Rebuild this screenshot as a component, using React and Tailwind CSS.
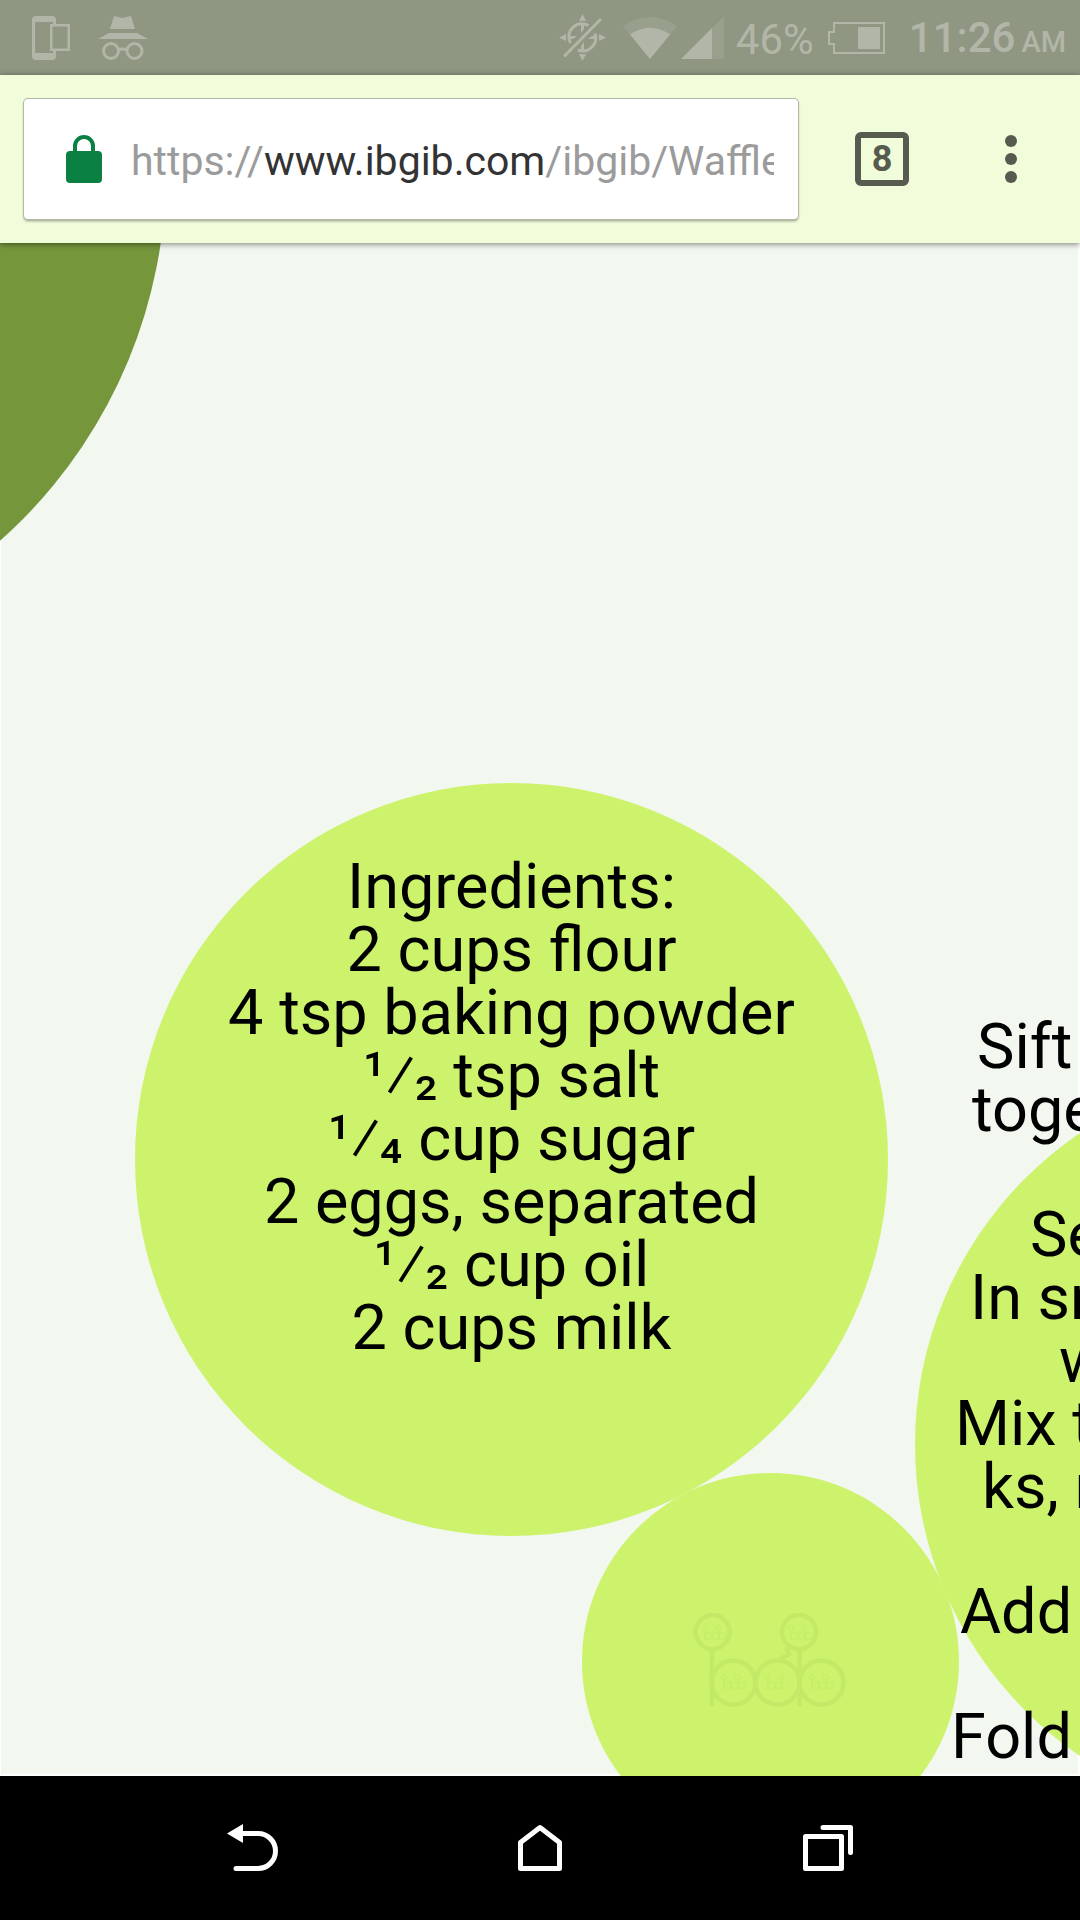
const ingredients = [
  { text: "Ingredients:" },
  { text: "2 cups flour" },
  { text: "4 tsp baking powder" },
  { over: "¹", under: "₂", text: " tsp salt" },
  { over: "¹", under: "₄", text: " cup sugar" },
  { text: "2 eggs, separated" },
  { over: "¹", under: "₂", text: " cup oil" },
  { text: "2 cups milk" },
];

const steps = [
  ["Sift", "pl-[26px]"],
  ["toge", "pl-[21px]"],
  ["", "h-[62px]"],
  ["Se", "pl-[79px]"],
  ["In sm", "pl-[19px]"],
  ["w", "pl-[108px]"],
  ["Mix t", "pl-[4px]"],
  ["ks, n", "pl-[31px]"],
  ["", "h-[62px]"],
  ["Add", "pl-[9px]"],
  ["", "h-[62px]"],
  ["Fold", "pl-0"],
];

function DevicesIcon() {
  return (
    <svg width="38" height="44" viewBox="0 0 38 44" fill="currentColor" fillRule="evenodd" aria-hidden="true">
      <path d="M4 0h16a4 4 0 0 1 4 4v4h14v27H24v5a4 4 0 0 1-4 4H4a4 4 0 0 1-4-4V4a4 4 0 0 1 4-4zM3 6v31h18v-2h-3V8h3V6zM20.500 10.500v22H35.500v-22z" />
    </svg>
  );
}

function IncognitoIcon() {
  return (
    <svg width="50" height="44" viewBox="0 0 50 44" fill="currentColor" aria-hidden="true">
      <path d="M16 0l8.500 2L33 0l4 13H12z" />
      <path d="M11 17h28l11 6H0z" />
      <g fill="none" stroke="currentColor" strokeWidth="3">
        <circle cx="13" cy="35" r="7.5" />
        <circle cx="36.500" cy="35" r="7.500" />
        <path d="M20 34q4.500-2 9 0" />
      </g>
    </svg>
  );
}

function GpsOffIcon() {
  return (
    <svg width="48" height="48" viewBox="0 0 48 48" fill="currentColor" aria-hidden="true">
      <path d="M23.500 0l3.500 7h-7zM23.500 47l3.500-7h-7zM0 23.500l7-3.500v7zM47 23.500l-7-3.500v7z" />
      <path d="M22 10h3v5l-3 4zM25 37h-3v-5l3-4zM10 22h8l-4 3h-4zM37 25h-8l4-3h4z" />
      <g fill="none" stroke="currentColor" strokeWidth="3">
        <path d="M29.500 11.500A13 13 0 0 0 11.500 29M36 19.500A13 13 0 0 1 19 36" />
        <path d="M5 42.500L42 5" />
      </g>
    </svg>
  );
}

function WifiIcon() {
  return (
    <svg width="54" height="42" viewBox="0 0 54 42" fill="currentColor" aria-hidden="true">
      <path opacity=".3" d="M27 42L0 9Q27-9 54 9z" />
      <path d="M27 42L7 17.500Q27 4 47 17.500z" />
    </svg>
  );
}

function SignalIcon() {
  return (
    <svg width="43" height="43" viewBox="0 0 43 43" fill="currentColor" aria-hidden="true">
      <path opacity=".3" d="M43 0v43H31V12z" />
      <path d="M31 12v31H0z" />
    </svg>
  );
}

function BatteryIcon() {
  return (
    <svg width="57" height="32" viewBox="0 0 57 32" fill="none" stroke="currentColor" strokeWidth="2" aria-hidden="true">
      <path d="M6 1h50v30H6v-9H1V10h5z" />
      <path d="M30 5h22v22H30z" fill="currentColor" stroke="none" />
    </svg>
  );
}

function LockIcon() {
  return (
    <svg width="36" height="48" viewBox="0 0 36 48" aria-hidden="true">
      <rect y="16" width="36" height="32" rx="4" fill="#0b8043" />
      <path d="M9 18v-7a9 9 0 0 1 18 0v7" fill="none" stroke="#0b8043" strokeWidth="4" />
    </svg>
  );
}

function MiniMark({ x, y }) {
  return (
    <g transform={`translate(${x} ${y})`} strokeWidth="1" opacity=".6">
      <circle cx="2.500" cy="3" r="2.500" />
      <circle cx="16.500" cy="3" r="2.500" />
      <circle cx="6.500" cy="11" r="3.500" />
      <circle cx="13.500" cy="11" r="3.500" />
      <circle cx="20.500" cy="11" r="3.500" />
      <path d="M3 6v9M17 6v9" />
    </g>
  );
}

function BrandMark() {
  return (
    <svg width="154" height="94" viewBox="0 0 154 94" fill="none" stroke="#c3e967" strokeWidth="4.500" aria-label="ibgib" role="img">
      <circle cx="19.500" cy="19" r="17" />
      <circle cx="106" cy="19" r="17" />
      <circle cx="40.500" cy="69.500" r="22" />
      <circle cx="84.500" cy="69.500" r="22" />
      <circle cx="128.500" cy="69.500" r="22" />
      <path d="M19 36v57M106.500 36v57M93 34l3 7-10 6" />
      <MiniMark x={9} y={12} />
      <MiniMark x={95} y={12} />
      <MiniMark x={28} y={61} />
      <MiniMark x={72} y={61} />
      <MiniMark x={116} y={61} />
    </svg>
  );
}

function StatusBar() {
  return (
    <header className="flex h-[75px] items-center bg-[#8f9782] pl-8 pr-[14px] text-[#b1b6a8]">
      <DevicesIcon />
      <span className="ml-7"><IncognitoIcon /></span>
      <div className="ml-auto flex items-center">
        <GpsOffIcon />
        <span className="ml-4"><WifiIcon /></span>
        <span className="ml-1"><SignalIcon /></span>
        <span className="ml-3 pt-1 text-[42px] leading-[48px]">46%</span>
        <span className="ml-[14px]"><BatteryIcon /></span>
        <span className="ml-6 flex items-baseline gap-1.5 pt-1 font-medium">
          <span className="text-[42px] leading-[48px]">11:26</span>
          <span className="text-[29px] leading-[48px]">AM</span>
        </span>
      </div>
    </header>
  );
}

function Toolbar() {
  return (
    <div className="relative z-10 flex h-[168px] items-center bg-[#f0fcda] pl-6 shadow-[0_1px_6px_rgba(0,0,0,0.5)]">
      <div className="flex h-[120px] min-w-0 flex-1 items-center rounded-[4px] bg-white pl-[42px] pr-6 shadow-[0_0_0_1px_#b3baa3,0_2px_3px_rgba(0,0,0,0.4)]">
        <LockIcon />
        <a href="#page" className="ml-[29px] block flex-1 overflow-hidden whitespace-nowrap pt-1 text-[41px] leading-[48px] text-[#9b9b9b]">
          https://<span className="text-[#333333]">www.ibgib.com</span>/ibgib/Waffles
        </a>
      </div>
      <button aria-label="8 open tabs" className="ml-[57px] flex size-[54px] items-center justify-center rounded-[6px] border-[6px] border-[#575b4f] text-[36px] font-bold leading-none text-[#575b4f]">
        8
      </button>
      <button aria-label="Menu" className="ml-[84px] mr-[51px] flex h-[60px] w-9 flex-col items-center justify-center gap-1.5">
        <span className="size-3 rounded-full bg-[#575b4f]" />
        <span className="size-3 rounded-full bg-[#575b4f]" />
        <span className="size-3 rounded-full bg-[#575b4f]" />
      </button>
    </div>
  );
}

function Fraction({ over, under }) {
  return (
    <span>
      {over}⁄<span className="align-[8px] leading-[0px]">{under}</span>
    </span>
  );
}

function Canvas() {
  return (
    <main id="page" className="relative flex-1 overflow-hidden bg-white text-[63px] leading-[63px] text-black">
      <div className="absolute bottom-0.5 left-px right-0.5 top-0 bg-[#f2f7f0]" />
      <div className="absolute left-[-824px] top-[-567px] size-[990px] rounded-full bg-[#76963c]" />
      <div className="absolute left-[135px] top-[540px] flex size-[753px] flex-col items-center rounded-full bg-[#ccf36b] pt-[72px] text-center">
        {ingredients.map((line, i) => (
          <p key={i} className="whitespace-nowrap">
            {line.over && <Fraction over={line.over} under={line.under} />}
            {line.text}
          </p>
        ))}
      </div>
      <div className="absolute left-[915px] top-[825px] size-[753px] rounded-full bg-[#ccf36b]" />
      <div className="absolute left-[582px] top-[1230px] flex size-[377px] items-center justify-center rounded-full bg-[#ccf36b] pb-1 pr-0.5">
        <BrandMark />
      </div>
      <div className="absolute left-[951px] top-[772px]">
        {steps.map(([line, indent], i) => (
          <p key={i} className={`whitespace-nowrap ${indent}`}>{line}</p>
        ))}
      </div>
    </main>
  );
}

function NavBar() {
  return (
    <nav className="flex h-36 items-center justify-center gap-[240px] bg-black text-white">
      <button aria-label="Back">
        <svg width="51" height="48" viewBox="0 0 51 48" fill="none" stroke="currentColor" strokeWidth="5" strokeLinecap="round">
          <path d="M0 9.500L16 0v19z" fill="currentColor" stroke="none" />
          <path d="M12 9.500h19a17.500 17.500 0 0 1 0 35H9" />
        </svg>
      </button>
      <button aria-label="Home">
        <svg width="44" height="48" viewBox="0 0 44 48" fill="none" stroke="currentColor" strokeWidth="5" strokeLinejoin="round">
          <path d="M22 3.500L41.500 18.500v26h-39v-26z" />
        </svg>
      </button>
      <button aria-label="Recent apps">
        <svg width="51" height="48" viewBox="-1 0 51 48" fill="none" stroke="currentColor" strokeWidth="5" strokeLinecap="round" strokeLinejoin="round">
          <path d="M2.500 12.500h36v32h-36zM20 3.500h27.500v25" />
        </svg>
      </button>
    </nav>
  );
}

export default function App() {
  return (
    <div className="flex h-screen flex-col overflow-hidden bg-white font-[Roboto,sans-serif]">
      <StatusBar />
      <Toolbar />
      <Canvas />
      <NavBar />
    </div>
  );
}
